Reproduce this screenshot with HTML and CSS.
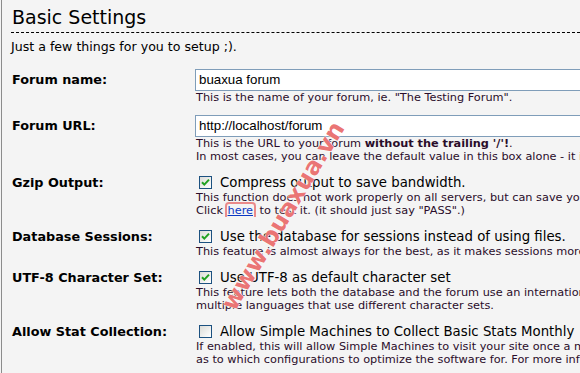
FILE: index.html
```html
<!DOCTYPE html>
<html>
<head>
    <title>Basic Settings</title>
    <link rel="stylesheet" href="styles.css">
</head>
<body>
    <div class="panel">
        <h1 class="title">Basic Settings</h1>
        <p class="intro">Just a few things for you to setup ;).</p>

        <div class="settings">
            <div class="label">Forum name:</div>
            <div class="value">
                <div class="textbox">buaxua forum</div>
                <div class="help">This is the name of your forum, ie. "The Testing Forum".</div>
            </div>

            <div class="label">Forum URL:</div>
            <div class="value">
                <div class="textbox">http://localhost/forum</div>
                <div class="help">This is the URL to your forum <b>without the trailing '/'!</b>.</div>
                <div class="help">In most cases, you can leave the default value in this box alone - it is</div>
            </div>

            <div class="label check">Gzip Output:</div>
            <div class="value">
                <div class="option"><span class="box"><svg width="9" height="9" viewBox="0 0 9 9"><path d="M1 4.2 L3.3 6.6 L8 1.6" fill="none" stroke="#21a121" stroke-width="2"/></svg></span>Compress output to save bandwidth.</div>
                <div class="help">This function does not work properly on all servers, but can save you a</div>
                <div class="help">Click <a href="#" class="here">here</a> to test it. (it should just say "PASS".)</div>
            </div>

            <div class="label check">Database Sessions:</div>
            <div class="value">
                <div class="option"><span class="box"><svg width="9" height="9" viewBox="0 0 9 9"><path d="M1 4.2 L3.3 6.6 L8 1.6" fill="none" stroke="#21a121" stroke-width="2"/></svg></span>Use the database for sessions instead of using files.</div>
                <div class="help">This feature is almost always for the best, as it makes sessions more</div>
            </div>

            <div class="label check">UTF-8 Character Set:</div>
            <div class="value">
                <div class="option"><span class="box"><svg width="9" height="9" viewBox="0 0 9 9"><path d="M1 4.2 L3.3 6.6 L8 1.6" fill="none" stroke="#21a121" stroke-width="2"/></svg></span>Use UTF-8 as default character set</div>
                <div class="help">This feature lets both the database and the forum use an international</div>
                <div class="help">multiple languages that use different character sets.</div>
            </div>

            <div class="label check">Allow Stat Collection:</div>
            <div class="value">
                <div class="option"><span class="box"></span>Allow Simple Machines to Collect Basic Stats Monthly</div>
                <div class="help">If enabled, this will allow Simple Machines to visit your site once a month</div>
                <div class="help">as to which configurations to optimize the software for. For more info</div>
            </div>
        </div>
    </div>

    <div class="watermark">www.buaxua.vn</div>
</body>
</html>
```

FILE: styles.css
```css
html, body {
    margin: 0;
    padding: 0;
    background: #f4f4f4;
    overflow: hidden;
}

.panel {
    margin-left: 1px;
    border-left: 1px solid #8c8c8c;
    padding: 6px 0 0 9px;
    height: 373px;
    box-sizing: border-box;
    overflow: hidden;
    font-family: "DejaVu Sans", Verdana, sans-serif;
    color: #000;
}

.title {
    font-size: 19px;
    font-weight: normal;
    margin: 0;
    padding: 0 0 4px 1px;
    border-bottom: 1px dashed #000;
    line-height: 22px;
    white-space: nowrap;
}

.intro {
    font-size: 12.6px;
    line-height: 15px;
    margin: 6px 0 0 0;
    white-space: nowrap;
}

.settings {
    display: grid;
    grid-template-columns: 184px 1fr;
    row-gap: 11px;
    margin-top: 15px;
}

.label {
    font-size: 12.8px;
    font-weight: bold;
    line-height: 22px;
    padding-left: 1px;
    white-space: nowrap;
}

.label.check {
    line-height: 17px;
}

.value {
    min-width: 0;
    overflow: hidden;
    white-space: nowrap;
}

.textbox {
    width: 420px;
    height: 20px;
    border: 1px solid #7f9db9;
    background: #fff;
    font-family: "Liberation Sans", Arial, sans-serif;
    font-size: 13.3px;
    line-height: 20px;
    padding-left: 3px;
}

.help {
    font-size: 11.3px;
    line-height: 13px;
    color: #2a0d2a;
    padding-left: 1px;
}

.option {
    font-size: 13.3px;
    line-height: 17px;
    height: 17px;
    display: flex;
    align-items: center;
    padding-left: 4px;
}

.box {
    width: 11px;
    height: 11px;
    flex: none;
    border: 1px solid #1c5180;
    background: linear-gradient(135deg, #dcdcd7, #fff);
    margin-right: 8px;
    display: flex;
    align-items: center;
    justify-content: center;
}

.here {
    color: #0b38c4;
    border: 2px solid #ea8a8a;
    border-radius: 4px;
    padding: 0 1px 1px 1px;
    margin-left: -2px;
}

.watermark {
    position: absolute;
    left: 173px;
    top: 202px;
    width: 220px;
    text-align: center;
    transform: rotate(-59deg);
    font-family: "DejaVu Sans", sans-serif;
    font-weight: bold;
    font-size: 24px;
    line-height: 28px;
    color: rgba(225, 55, 55, 0.7);
    text-shadow: 0 0 2px #fff, 0 0 1px #fff;
    white-space: nowrap;
}
```
